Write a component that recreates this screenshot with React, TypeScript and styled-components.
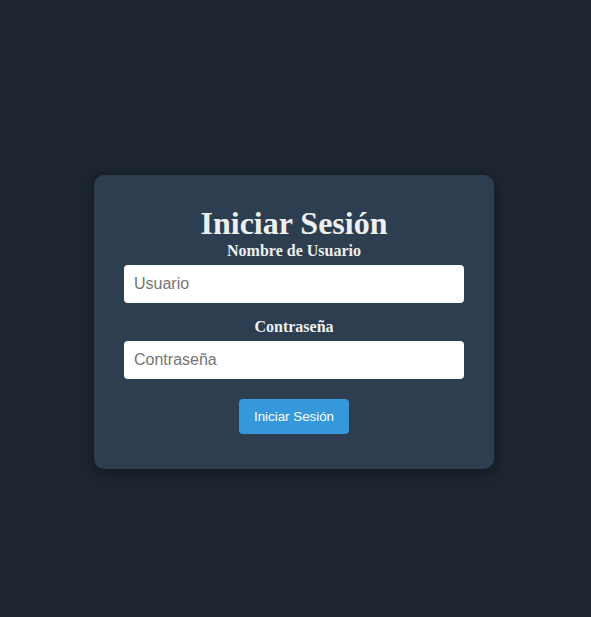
import React from "react";
import styled, { createGlobalStyle } from "styled-components";

const GlobalStyle = createGlobalStyle`
  html, body {
    margin: 0;
    padding: 0;
    background: #1c2530;
  }
  body {
    font-family: "Liberation Serif", "Times New Roman", serif;
  }
`;

const Page = styled.div`
  min-height: 100vh;
  box-sizing: border-box;
  display: flex;
  align-items: flex-start;
  justify-content: flex-start;
  padding: 175px 0 0 94px;
`;

const Card = styled.div`
  width: 400px;
  box-sizing: border-box;
  padding: 30px 30px 35px;
  background: #2c3e50;
  border-radius: 10px;
  box-shadow: 0 4px 12px rgba(0, 0, 0, 0.35);
  color: #ecf0f1;
  text-align: center;
`;

const Title = styled.h1`
  margin: 0;
  font-family: "Liberation Serif", "Times New Roman", serif;
  font-size: 32px;
  font-weight: bold;
  color: #ecf0f1;
`;

const Form = styled.form`
  display: flex;
  flex-direction: column;
  align-items: stretch;
`;

const Group = styled.div`
  display: flex;
  flex-direction: column;
  margin-bottom: 15px;
`;

const Label = styled.label`
  display: block;
  margin-bottom: 5px;
  font-family: "Liberation Serif", "Times New Roman", serif;
  font-size: 16px;
  font-weight: bold;
  color: #ecf0f1;
`;

const Input = styled.input`
  box-sizing: border-box;
  width: 100%;
  height: 38px;
  padding: 10px;
  border: none;
  border-radius: 4px;
  background: #ffffff;
  font-family: "Liberation Sans", Arial, sans-serif;
  font-size: 16px;
  color: #333;
  outline: none;
  &::placeholder {
    color: #757575;
  }
`;

const Button = styled.button`
  align-self: center;
  margin-top: 5px;
  height: 35px;
  padding: 0 15px;
  border: none;
  border-radius: 4px;
  background: #3498db;
  color: #ffffff;
  font-family: "Liberation Sans", Arial, sans-serif;
  font-size: 13.333px;
  cursor: pointer;
`;

export default function App() {
  return (
    <>
      <GlobalStyle />
      <Page>
        <Card>
          <Title>Iniciar Sesión</Title>
          <Form onSubmit={(e) => e.preventDefault()}>
            <Group>
              <Label htmlFor="user">Nombre de Usuario</Label>
              <Input id="user" type="text" placeholder="Usuario" />
            </Group>
            <Group>
              <Label htmlFor="pass">Contraseña</Label>
              <Input id="pass" type="password" placeholder="Contraseña" />
            </Group>
            <Button type="submit">Iniciar Sesión</Button>
          </Form>
        </Card>
      </Page>
    </>
  );
}
